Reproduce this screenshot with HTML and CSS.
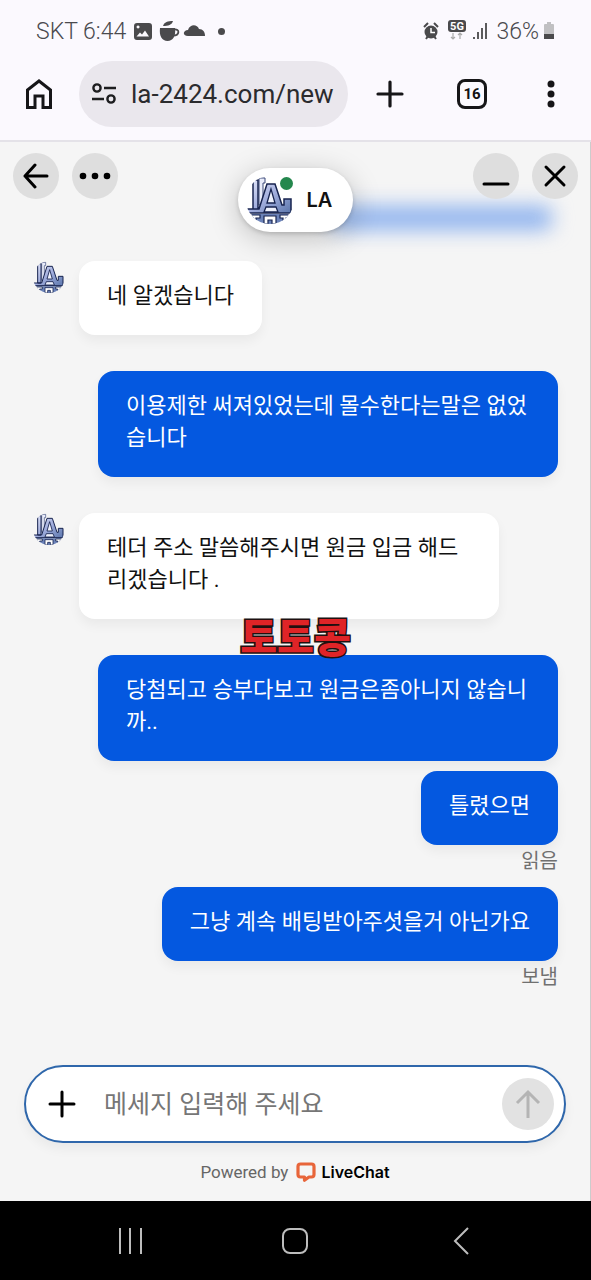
FILE: index.html
```
<!DOCTYPE html>
<html lang="ko">
<head>
    <meta charset="utf-8">
    <meta name="viewport" content="width=device-width, initial-scale=1">
    <title>LA LiveChat</title>
    <link rel="stylesheet" href="styles.css">
</head>
<body>
<svg class="defs" width="0" height="0">
    <defs>
        <linearGradient id="steel" x1="0" y1="0" x2="1" y2="1">
            <stop offset="0" stop-color="#e6e9fa"/>
            <stop offset="0.5" stop-color="#a3afde"/>
            <stop offset="1" stop-color="#5b76ac"/>
        </linearGradient>
        <clipPath id="round"><circle cx="24" cy="24" r="24"/></clipPath>
        <symbol id="la" viewBox="0 0 48 48">
            <g clip-path="url(#round)">
                <path d="M6 38h36v10H6z" fill="#6c83b9"/>
                <path d="M13 2h6v5h-2v22h-4z" fill="#e9ecfa" stroke="#3a4878"/>
                <path d="M7 4h5v29H1v4h44V23h-7v6h-2L29 8h-8l-8 25H7z" fill="url(#steel)" stroke="#17234f" stroke-width="1.500"/>
                <path d="M25 13l-4 14h8z M20 31h10l2 5H18z" fill="#eef1fc" stroke="#17234f" stroke-width="1.300"/>
                <path d="M4 39h10v3h-4v4H7v-4H4z M34 39h10v3h-4v4h-3v-4h-3z M18 40h12v8h-4v-4h-4v4h-4z" fill="#fff" stroke="#17234f" stroke-width="1.200"/>
            </g>
        </symbol>
    </defs>
</svg>

<div class="statusbar">
    <span class="carrier">SKT 6:44</span>
    <svg class="notes" width="80" height="22" viewBox="0 0 80 22" fill="#4a4a4c">
        <path fill-rule="evenodd" d="M3 3h12a3 3 0 0 1 3 3v11a3 3 0 0 1-3 3H3a3 3 0 0 1-3-3V6a3 3 0 0 1 3-3zM2.500 16.500h12.500l-4-6-3 4-2-2zM4 5.500a1.500 1.500 0 1 0 .1 0z"/>
        <path d="M26 8h15c1 8-2 13-7.500 13S25 16 26 8z"/>
        <path d="M40 9.500c6-1 6 6-1 6" fill="none" stroke="#4a4a4c" stroke-width="1.800"/>
        <path d="M29 6c1-4 5-5 10-5-1 4-5 5-10 5z"/>
        <path d="M54 16c-6 0-5-6 0-6 2-6 9-6 11-1 4 0 6 3 6 7z"/>
    </svg>
    <i class="dot"></i>
    <span class="space"></span>
    <svg width="64" height="22" viewBox="0 0 64 22" fill="#4a4a4c">
        <circle cx="8" cy="12" r="6.500"/>
        <path d="M1 7l4-4M15 7l-4-4M3 19l2-3M13 19l-2-3" stroke="#4a4a4c" stroke-width="2"/>
        <path d="M8 8v4.500h4" fill="none" stroke="#fff" stroke-width="1.500"/>
        <rect x="25" y="0" width="18" height="12" rx="3"/>
        <text x="34" y="10" class="net">5G</text>
        <path d="M30 13v6m-2-2l2 2 2-2M37 19v-6m-2 2l2-2 2 2" fill="none" stroke="#aaa" stroke-width="1.200"/>
        <path d="M51 17v2M55 12v7M59 8v11M63 3v16" stroke="#4a4a4c" stroke-width="1.800"/>
    </svg>
    <span class="percent">36%</span>
    <svg width="12" height="18" viewBox="0 0 12 18">
        <path d="M4 0h4v2h2a1 1 0 0 1 1 1v9H1V3a1 1 0 0 1 1-1h2z" fill="#c0c0c2"/>
        <path d="M1 12h10v5H1z" fill="#4a4a4c"/>
    </svg>
</div>

<div class="browser">
    <button class="home" aria-label="Home">
        <svg width="30" height="32" viewBox="0 0 30 32" fill="none" stroke="#161618" stroke-width="3">
            <path d="M3.500 12L15 3l11.500 9v17.500H19V18h-8v11.500H3.500z"/>
        </svg>
    </button>
    <label class="address">
        <svg width="26" height="22" viewBox="0 0 26 22" fill="none" stroke="#1d1d1f" stroke-width="2.400">
            <circle cx="6" cy="5" r="3.600"/><circle cx="20" cy="16" r="3.600"/>
            <path d="M13 5h12M1 16h12"/>
        </svg>
        <input type="text" value="la-2424.com/new" aria-label="Address">
    </label>
    <button class="newtab" aria-label="New tab">
        <svg width="28" height="28" viewBox="0 0 28 28" stroke="#161618" stroke-width="3.200" stroke-linecap="round">
            <path d="M14 2v24M2 14h24"/>
        </svg>
    </button>
    <button class="tabs">16</button>
    <button class="more" aria-label="Menu">
        <svg width="8" height="28" viewBox="0 0 8 28" fill="#161618">
            <circle cx="4" cy="4" r="3.500"/><circle cx="4" cy="14" r="3.500"/><circle cx="4" cy="24" r="3.500"/>
        </svg>
    </button>
</div>

<div class="chat">
    <div class="chat_head">
        <div class="smear"></div>
        <div class="group">
            <button class="round" aria-label="Back">
                <svg width="26" height="26" viewBox="0 0 26 26" fill="none" stroke="#000" stroke-width="3" stroke-linecap="round" stroke-linejoin="round">
                    <path d="M24 13H2M12 2L2 13l10 11"/>
                </svg>
            </button>
            <button class="round" aria-label="Options">
                <svg width="32" height="8" viewBox="0 0 32 8">
                    <circle cx="4" cy="4" r="3.300"/><circle cx="16" cy="4" r="3.300"/><circle cx="28" cy="4" r="3.300"/>
                </svg>
            </button>
        </div>
        <div class="agent">
            <svg width="48" height="48"><use href="#la"/></svg>
            <i class="online"></i>
            <b>LA</b>
        </div>
        <div class="group right">
            <button class="round" aria-label="Minimize">
                <svg width="28" height="28" viewBox="0 0 28 28" stroke="#000" stroke-width="3" stroke-linecap="round">
                    <path d="M2 22h24"/>
                </svg>
            </button>
            <button class="round" aria-label="Close">
                <svg width="24" height="24" viewBox="0 0 24 24" stroke="#000" stroke-width="3" stroke-linecap="round">
                    <path d="M3 3l18 18M21 3L3 21"/>
                </svg>
            </button>
        </div>
    </div>

    <div class="messages">
        <div class="msg in">
            <svg class="avatar" width="32" height="32"><use href="#la"/></svg>
            <p>네 알겠습니다</p>
        </div>
        <div class="msg out">
            <p>이용제한 써져있었는데 몰수한다는말은 없었습니다</p>
        </div>
        <div class="msg in">
            <svg class="avatar" width="32" height="32"><use href="#la"/></svg>
            <p>테더 주소 말씀해주시면 원금 입금 해드리겠습니다 .</p>
            <strong class="mark">토토콩</strong>
        </div>
        <div class="msg out">
            <p>당첨되고 승부다보고 원금은좀아니지 않습니까..</p>
        </div>
        <div class="msg out next">
            <p>틀렸으면</p>
            <small>읽음</small>
        </div>
        <div class="msg out next">
            <p>그냥 계속 배팅받아주셧을거 아닌가요</p>
            <small>보냄</small>
        </div>
    </div>

    <form class="composer">
        <button type="button" class="attach" aria-label="Attach">
            <svg width="28" height="28" viewBox="0 0 28 28" stroke="#000" stroke-width="3" stroke-linecap="round">
                <path d="M14 2v24M2 14h24"/>
            </svg>
        </button>
        <input type="text" placeholder="메세지 입력해 주세요" aria-label="메세지">
        <button type="button" class="send" aria-label="Send">
            <svg width="28" height="30" viewBox="0 0 28 30" fill="none" stroke="#b4b4b4" stroke-width="3">
                <path d="M14 29V3M3 14L14 3l11 11"/>
            </svg>
        </button>
    </form>

    <div class="powered">
        Powered by
        <a href="#">
            <svg width="20" height="20" viewBox="0 0 20 20" fill="none" stroke="#e8653a" stroke-width="3.200" stroke-linejoin="round">
                <path d="M4.500 2h11Q18 2 18 4.500v8Q18 15 15.500 15H13l-4.500 3.200V15h-4Q2 15 2 12.500v-8Q2 2 4.500 2z"/>
            </svg>
            LiveChat
        </a>
    </div>
</div>

<div class="navbar">
    <button aria-label="Recents">
        <svg width="28" height="28" viewBox="0 0 28 28" stroke="#bdbdbd" stroke-width="2"><path d="M4 1v26M14 1v26M25 1v26"/></svg>
    </button>
    <button aria-label="Home screen">
        <svg width="28" height="28" viewBox="0 0 28 28" fill="none" stroke="#bdbdbd" stroke-width="2"><rect x="2" y="2" width="24" height="24" rx="7"/></svg>
    </button>
    <button aria-label="Go back">
        <svg width="28" height="28" viewBox="0 0 28 28" fill="none" stroke="#bdbdbd" stroke-width="2"><path d="M21 1L8 14l13 13"/></svg>
    </button>
</div>
</body>
</html>
```
FILE: styles.css
```
*{margin:0;padding:0;box-sizing:border-box;}
body{
    min-height:100vh;
    display:flex;
    flex-direction:column;
    background:#fbf9fe;
    font-family:Roboto,"Noto Sans CJK KR",sans-serif;
    color:#111;
}
button,input{border:none;background:none;font:inherit;color:inherit;outline:none;}
button{display:flex;align-items:center;justify-content:center;cursor:pointer;}
svg{display:block;flex:none;}
a{color:inherit;text-decoration:none;}
.defs{position:absolute;}

.statusbar{
    display:flex;
    align-items:center;
    height:62px;
    padding:0 36px;
    font-size:23px;
    font-weight:300;
    color:#4a4a4e;
}
.notes{margin-left:8px;}
.dot{width:7px;height:7px;margin-left:4px;border-radius:50%;background:#4a4a4c;}
.space{flex:1;}
.net{font:bold 11px Roboto,sans-serif;fill:#fff;text-anchor:middle;}
.percent{margin:0 4px 0 9px;}

.browser{
    display:flex;
    align-items:center;
    height:80px;
    padding:0 36px 14px 24px;
    border-bottom:2px solid #e4e2e8;
}
.address{
    display:flex;
    align-items:center;
    flex:1;
    min-width:0;
    height:66px;
    margin:0 28px 0 25px;
    padding:0 12px;
    gap:14px;
    border-radius:33px;
    background:#eae7ed;
}
.address input{flex:1;min-width:0;width:0;font-size:26px;color:#2b2b2e;}
.tabs{
    width:30px;
    height:30px;
    margin:0 60px 0 53px;
    border:3px solid #161618;
    border-radius:8px;
    font-size:15px;
    font-weight:bold;
}

.chat{
    display:flex;
    flex-direction:column;
    flex:1;
    background:#f5f5f5;
    border-right:1px solid #ccc;
}
.chat_head{
    position:relative;
    display:grid;
    grid-template-columns:1fr auto 1fr;
    align-items:start;
    padding:11px 12px 0 13px;
}
.group{position:relative;display:flex;gap:13px;}
.right{justify-content:flex-end;}
.round{width:46px;height:46px;border-radius:50%;background:#dedede;}
.agent{
    position:relative;
    display:flex;
    align-items:center;
    height:64px;
    margin-top:15px;
    padding:0 21px 0 8px;
    gap:13px;
    border-radius:32px;
    background:#fff;
    box-shadow:0 2px 4px rgba(0,0,0,0.15),0 6px 30px rgba(0,0,0,0.22);
}
.agent b{font-weight:600;font-family:Inter,sans-serif;font-size:20px;}
.online{
    position:absolute;
    left:42px;
    top:9px;
    width:13px;
    height:13px;
    border-radius:50%;
    background:#24874d;
}
.smear{
    position:absolute;
    left:56%;
    right:38px;
    top:64px;
    height:24px;
    border-radius:8px;
    background:#8fb3ee;
    filter:blur(10px);
}

.messages{
    display:flex;
    flex-direction:column;
    flex:1;
    gap:36px;
    padding:29px 32px 20px 33px;
}
.msg{position:relative;display:flex;}
.msg p{
    padding:19px 28px 23px;
    border-radius:16px;
    font-size:22px;
    line-height:32px;
    word-break:break-all;
    box-shadow:0 6px 12px rgba(0,0,0,0.05);
}
.in{align-items:flex-start;gap:14px;padding-right:59px;}
.in p{background:#fff;}
.out{flex-direction:column;align-items:flex-end;padding-left:65px;}
.out p{background:#0458e0;color:#fff;}
.next{margin-top:-26px;}
.msg small{font-size:20px;line-height:32px;color:#707070;}
.mark{
    position:absolute;
    left:0;
    right:0;
    bottom:-42px;
    z-index:1;
    text-align:center;
    font-size:40px;
    line-height:44px;
    font-weight:900;
    color:#df2427;
    -webkit-text-stroke:3px #201010;
    paint-order:stroke fill;
}

.composer{
    display:flex;
    align-items:center;
    height:78px;
    margin:0 24px;
    padding:0 10px 0 22px;
    gap:28px;
    border:2px solid #2f67ab;
    border-radius:39px;
    background:#fff;
    box-shadow:0 6px 12px rgba(0,0,0,0.05);
}
.composer input{flex:1;min-width:0;font-size:25px;}
.composer input::placeholder{color:#767676;}
.send{width:52px;height:52px;border-radius:50%;background:#e2e2e2;}
.powered{
    display:flex;
    justify-content:center;
    align-items:center;
    height:58px;
    gap:8px;
    font-size:17px;
    color:#666;
}
.powered a{
    display:flex;
    align-items:center;
    gap:5px;
    font:600 16px Inter,sans-serif;
    color:#000;
}
.navbar{
    display:grid;
    grid-template-columns:repeat(3,1fr);
    justify-items:center;
    align-items:center;
    height:79px;
    padding:0 47px;
    background:#000;
}
```
